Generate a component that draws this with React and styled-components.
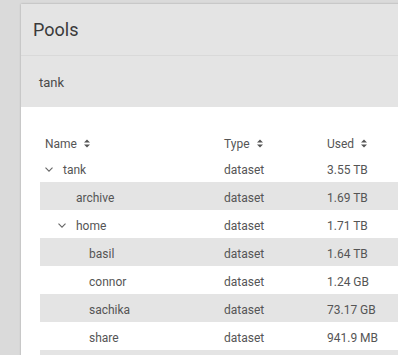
import React from 'react';
import styled, { createGlobalStyle } from 'styled-components';

const GlobalStyle = createGlobalStyle`
  html, body {
    margin: 0;
    padding: 0;
    background: #dadada;
    overflow: hidden;
  }
  body {
    font-family: Roboto, "Liberation Sans", Arial, sans-serif;
    color: #555;
  }
`;

const Page = styled.div`
  padding: 4px 0 0 21px;
  height: 355px;
  box-sizing: border-box;
  overflow: hidden;
`;

const Panel = styled.section`
  width: 420px;
  min-height: 400px;
  background: #ffffff;
  box-shadow: 0 0 2px rgba(0, 0, 0, 0.25);
`;

const PanelHeader = styled.header`
  height: 51px;
  display: flex;
  align-items: center;
  padding-left: 12px;
  background: #e4e4e4;
  border-bottom: 1px solid #d9d9d9;
`;

const PanelTitle = styled.h2`
  margin: 0;
  font-size: 18px;
  font-weight: 400;
  color: #3a3a3a;
`;

const PoolBar = styled.div`
  height: 51px;
  display: flex;
  align-items: center;
  padding: 2px 0 0 18px;
  box-sizing: border-box;
  background: #e4e4e4;
  font-size: 13px;
  color: #4a4a4a;
`;

const Content = styled.div`
  padding: 23px 0 0 19px;
`;

const Row = styled.div`
  display: grid;
  grid-template-columns: 179px 103px 1fr;
  height: ${p => (p.$head ? '24px' : '28px')};
  align-items: center;
  font-size: 12px;
  color: #555;
  background: ${p => (p.$striped ? '#e4e4e4' : 'transparent')};
`;

const Cell = styled.div`
  display: flex;
  align-items: center;
  padding: 3px 0 0 5px;
  white-space: nowrap;
`;

const NameCell = styled(Cell)`
  padding-left: ${p => 5 + p.$level * 13}px;
`;

const Toggle = styled.span`
  width: 18px;
  display: inline-flex;
  align-items: center;
  flex: none;
`;

const SortIcon = styled.svg`
  margin-left: 7px;
  width: 6px;
  height: 9px;
`;

const Sort = () => (
  <SortIcon viewBox="0 0 6 9">
    <path d="M0 3.6 L3 0.4 L6 3.6 Z M0 5.4 L3 8.6 L6 5.4 Z" fill="#555" />
  </SortIcon>
);

const Chevron = () => (
  <svg width="8" height="5" viewBox="0 0 8 5">
    <polyline points="0.5,0.6 4,4.2 7.5,0.6" fill="none" stroke="#666" strokeWidth="1.1" />
  </svg>
);

const datasets = [
  { name: 'tank', level: 0, open: true, used: '3.55 TB' },
  { name: 'archive', level: 1, used: '1.69 TB' },
  { name: 'home', level: 1, open: true, used: '1.71 TB' },
  { name: 'basil', level: 2, used: '1.64 TB' },
  { name: 'connor', level: 2, used: '1.24 GB' },
  { name: 'sachika', level: 2, used: '73.17 GB' },
  { name: 'share', level: 2, used: '941.9 MB' },
];

export default function App() {
  return (
    <>
      <GlobalStyle />
      <Page>
        <Panel>
          <PanelHeader>
            <PanelTitle>Pools</PanelTitle>
          </PanelHeader>
          <PoolBar>tank</PoolBar>
          <Content>
            <Row $head>
              <Cell>Name<Sort /></Cell>
              <Cell>Type<Sort /></Cell>
              <Cell>Used<Sort /></Cell>
            </Row>
            {datasets.map((d, i) => (
              <Row key={d.name} $striped={i % 2 === 1}>
                <NameCell $level={d.level}>
                  <Toggle>{d.open && <Chevron />}</Toggle>
                  {d.name}
                </NameCell>
                <Cell>dataset</Cell>
                <Cell>{d.used}</Cell>
              </Row>
            ))}
            {/* next row continues below the fold */}
            <Row $striped />
          </Content>
        </Panel>
      </Page>
    </>
  );
}
